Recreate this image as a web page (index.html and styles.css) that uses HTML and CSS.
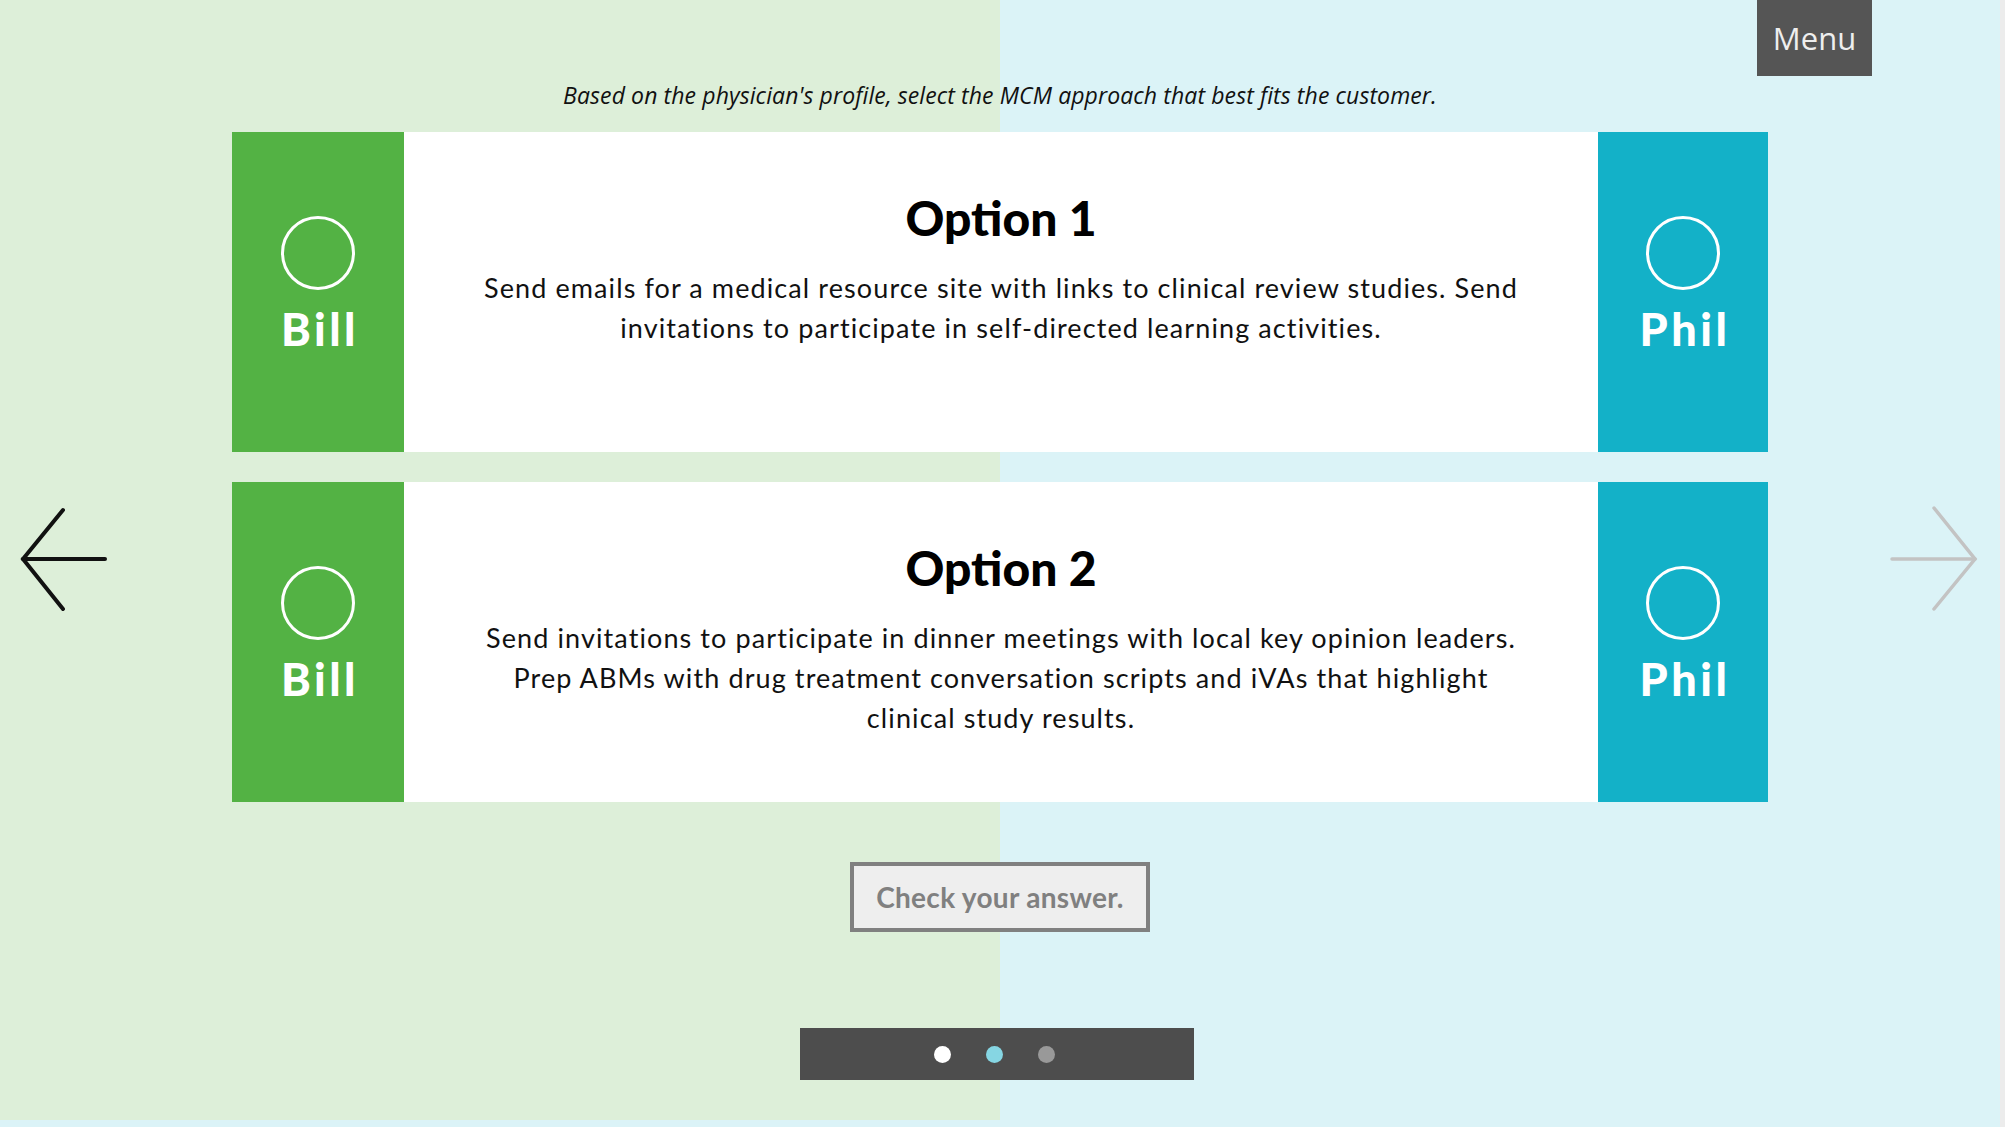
FILE: index.html
```html
<!DOCTYPE html>
<html lang="en">
<head>
<meta charset="utf-8">
<title>MCM approach</title>
<link rel="stylesheet" href="styles.css">
</head>
<body>
<div class="screen">
  <div class="stage">
    <p class="prompt">Based on the physician's profile, select the MCM approach that best fits the customer.</p>

    <div class="cards">
      <div class="card">
        <div class="pick pick-bill"><span class="ring"></span><span class="name">Bill</span></div>
        <div class="option">
          <h2 class="option-title">Option 1</h2>
          <p class="option-text">Send emails for a medical resource site with links to clinical review studies. Send invitations to participate in self-directed learning activities.</p>
        </div>
        <div class="pick pick-phil"><span class="ring"></span><span class="name">Phil</span></div>
      </div>
      <div class="card">
        <div class="pick pick-bill"><span class="ring"></span><span class="name">Bill</span></div>
        <div class="option">
          <h2 class="option-title">Option 2</h2>
          <p class="option-text">Send invitations to participate in dinner meetings with local key opinion leaders. Prep ABMs with drug treatment conversation scripts and iVAs that highlight clinical study results.</p>
        </div>
        <div class="pick pick-phil"><span class="ring"></span><span class="name">Phil</span></div>
      </div>
    </div>

    <button class="check" type="button">Check your answer.</button>

    <div class="pager">
      <span class="dot dot-white"></span>
      <span class="dot dot-blue"></span>
      <span class="dot dot-gray"></span>
    </div>

    <div class="menu">Menu</div>

    <svg class="arrow arrow-prev" width="120" height="120" viewBox="0 0 120 120" aria-hidden="true">
      <polyline points="63,10 23,59 63,109" fill="none" stroke="#111" stroke-width="4" stroke-linecap="round" stroke-linejoin="miter"/>
      <line x1="23" y1="59" x2="105" y2="59" stroke="#111" stroke-width="4" stroke-linecap="round"/>
    </svg>
    <svg class="arrow arrow-next" width="120" height="120" viewBox="0 0 120 120" aria-hidden="true">
      <polyline points="62,8 103,59 62,109" fill="none" stroke="#c3c3c3" stroke-width="3.5" stroke-linecap="round"/>
      <line x1="20" y1="59" x2="103" y2="59" stroke="#c3c3c3" stroke-width="3.5" stroke-linecap="round"/>
    </svg>
  </div>
  <div class="foot"></div>
</div>
<div class="edge"></div>
</body>
</html>
```

FILE: styles.css
```css
html, body {
  margin: 0;
  padding: 0;
}

body {
  width: 2005px;
  height: 1127px;
  overflow: hidden;
  display: flex;
  background: #ececec;
  font-family: "Lato", "Open Sans", sans-serif;
  color: #111;
}

.screen {
  width: 2000px;
  display: flex;
  flex-direction: column;
}

.edge {
  flex: 1;
  background: #ececec;
}

.stage {
  position: relative;
  height: 1120px;
  display: flex;
  flex-direction: column;
  align-items: center;
  background: linear-gradient(to right, #ddefd9 0, #ddefd9 1000px, #dbf3f7 1000px, #dbf3f7 100%);
}

.foot {
  flex: 1;
  background: #dbf3f7;
}

.prompt {
  margin: 80px 0 0;
  height: 30px;
  line-height: 30px;
  font-family: "Open Sans", sans-serif;
  font-style: italic;
  font-size: 23px;
  letter-spacing: 0.1px;
  color: #111;
}

.cards {
  margin-top: 22px;
  width: 1536px;
  display: flex;
  flex-direction: column;
  gap: 30px;
}

.card {
  height: 320px;
  display: grid;
  grid-template-columns: 172px 1fr 170px;
  background: #fff;
}

.pick {
  display: flex;
  flex-direction: column;
  align-items: center;
  padding-top: 84px;
  color: #fff;
}

.pick-bill { background: #53b244; }
.pick-phil { background: #13b1c8; }

.ring {
  width: 68px;
  height: 68px;
  border: 3px solid #fff;
  border-radius: 50%;
}

.name {
  margin-top: 14px;
  padding-left: 4px;
  font-family: "Lato", sans-serif;
  font-weight: 900;
  font-size: 45px;
  line-height: 50px;
  letter-spacing: 3.5px;
}

.option {
  padding: 58px 40px 0;
  text-align: center;
}

.option-title {
  margin: 0;
  font-family: "Lato", sans-serif;
  font-weight: 900;
  font-size: 48px;
  line-height: 56px;
  color: #000;
}

.option-text {
  margin: 22px auto 0;
  max-width: 1050px;
  font-family: "Lato", sans-serif;
  font-weight: 400;
  font-size: 27px;
  line-height: 40px;
  letter-spacing: 1.1px;
  color: #111;
}

.check {
  margin-top: 60px;
  width: 300px;
  height: 70px;
  border: 4px solid #808080;
  background: #eeeeee;
  color: #808080;
  font-family: "Lato", sans-serif;
  font-weight: 700;
  font-size: 28px;
  letter-spacing: 0.3px;
  padding: 0;
  cursor: pointer;
}

.pager {
  margin-top: 96px;
  margin-right: 6px;
  width: 394px;
  height: 52px;
  padding-right: 5px;
  box-sizing: border-box;
  background: #4d4d4d;
  display: flex;
  align-items: center;
  justify-content: center;
  gap: 35px;
}

.dot {
  width: 17px;
  height: 17px;
  border-radius: 50%;
}

.dot-white { background: #ffffff; }
.dot-blue { background: #86d6e3; }
.dot-gray { background: #999999; }

.menu {
  position: absolute;
  top: 0;
  left: 1757px;
  width: 115px;
  height: 76px;
  display: flex;
  align-items: center;
  justify-content: center;
  background: #555555;
  color: #eeeeee;
  font-family: "Open Sans", sans-serif;
  font-size: 31px;
}

.arrow {
  position: absolute;
  top: 500px;
}

.arrow-prev { left: 0; }
.arrow-next { left: 1872px; }
```
